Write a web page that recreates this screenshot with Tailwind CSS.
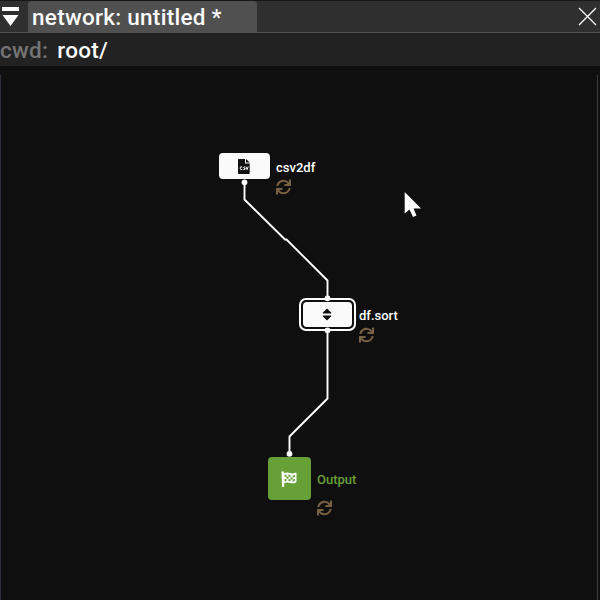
<!DOCTYPE html>
<html lang="en">
<head>
<meta charset="utf-8">
<title>network: untitled *</title>
<script src="https://cdn.jsdelivr.net/npm/@tailwindcss/browser@4"></script>
</head>
<body class="h-[600px] w-[600px] overflow-hidden bg-[#0f0f0f] font-['Roboto',sans-serif] text-white">
<svg class="hidden">
  <symbol id="sync" viewBox="0 0 512 512"><path d="M440.65 12.57l4 82.77A247.16 247.16 0 0 0 255.83 8C134.73 8 33.91 94.92 12.29 209.82A12 12 0 0 0 24.09 224h49.05a12 12 0 0 0 11.67-9.26 175.91 175.91 0 0 1 317-56.94l-101.46-4.86a12 12 0 0 0-12.57 12v47.41a12 12 0 0 0 12 12H500a12 12 0 0 0 12-12V12a12 12 0 0 0-12-12h-47.37a12 12 0 0 0-11.98 12.57zM255.83 432a175.61 175.61 0 0 1-146-77.8l101.8 4.87a12 12 0 0 0 12.57-12v-47.4a12 12 0 0 0-12-12H12a12 12 0 0 0-12 12V500a12 12 0 0 0 12 12h47.35a12 12 0 0 0 12-12.6l-4.15-82.57A247.17 247.17 0 0 0 255.83 504c121.11 0 221.93-86.92 243.55-201.82a12 12 0 0 0-11.8-14.18h-49.05a12 12 0 0 0-11.67 9.26A175.86 175.86 0 0 1 255.83 432z"/></symbol>
</svg>
<div class="flex h-full flex-col">
  <header class="flex h-[33px] shrink-0 border-t border-b border-t-[#171717] border-b-[#505050] bg-[#2f2f2f]">
    <button class="w-7 shrink-0" aria-label="Menu">
      <svg class="block h-[31px] w-7" viewBox="0 0 28 31" fill="#fff"><path d="M2 6h17v4H2zM2.500 14h16L10.500 25z"/></svg>
    </button>
    <div class="flex h-8 w-[229px] items-center rounded-t-[4px] bg-[#505050] pt-px pl-1 text-[22.500px] leading-none font-medium tracking-[0.280px] whitespace-nowrap text-[#fafafa]">network: untitled *</div>
    <button class="ml-auto w-7" aria-label="Close">
      <svg class="block h-[31px] w-7" viewBox="0 0 28 31" fill="none" stroke="#fff" stroke-width="1.300"><path d="M7 7l17 17M24 7L7 24"/></svg>
    </button>
  </header>
  <nav class="flex h-[33px] shrink-0 items-center gap-[9px] bg-[#222222] pt-[2px] text-[22.500px] leading-none font-medium tracking-[0.280px]">
    <span class="text-[#757575]">cwd:</span><span class="text-[#fafafa]">root/</span>
  </nav>
  <main class="relative mt-[9px] mr-[2px] flex-1 border-r border-l border-r-[#3c3c3c] border-l-[#30303c]">
    <!-- canvas coordinates start at the window's top left corner -->
    <div class="absolute -top-[75px] -left-px h-[600px] w-[600px]">
      <div class="absolute top-[153px] left-[219px] flex h-[26px] w-[51px] items-center justify-center rounded-[4px] bg-[#fafafa]">
        <svg class="mr-[2px] h-[15px] w-3" viewBox="0 0 12 15"><path fill="#111" d="M.700 0H7v4.500h4.700V14.300q0 .700-.700.700H.700Q0 15 0 14.300V.700Q0 0 .700 0zM8 0l3.700 3.600H8z"/><path d="M4.300 8q-2.200-1-2.200 1.200t2.200 1.200M7 8q-1.500-.300-1.400.600t1.300.800-.1 1.200H5.300M8 7.600l1.100 3L10.200 7.600" fill="none" stroke="#fafafa" stroke-width="1"/></svg>
      </div>
      <div class="absolute top-[298px] left-[299px] flex h-[33px] w-[57px] items-center justify-center rounded-[7px] border-2 border-white p-[2px]">
        <div class="flex h-full w-full items-center justify-center rounded-[4px] bg-[#fafafa]">
          <svg class="mr-px h-[13px] w-[10px]" viewBox="0 0 10 12" fill="#111"><path d="M5 0l4.300 4.200q.3.800-.5.800H1.200Q.4 5 .7 4.200zM5 12l4.300-4.200q.3-.8-.5-.8H1.200q-.8 0-.5.800z"/></svg>
        </div>
      </div>
      <div class="absolute top-[457px] left-[268px] flex h-[43px] w-[43px] items-center justify-center rounded-[4px] bg-[#68a038]">
        <svg class="mr-[2px] h-4 w-4" viewBox="0 0 16 16"><path fill="#fff" d="M.5 1.300a1.200 1.200 0 1 1 2.200.8Q5.800.7 9 2.100q2.800 1 5.700-.5.800-.1.800.7v8.300q0 .5-.5.800-3 1.600-6.200.5-2.900-1-5.600.1v3.200q0 .8-.8.800h-.6q-.8 0-.8-.8z"/><path fill="#68a038" d="M3.500 4l2-.6v2.100l-2 .6zM7.500 3.500l2 .6v2.100l-2-.6zM11.700 4.400l2.200-.5V6l-2.200.5zM5.500 5.600l2-.1v2.200l-2 .1zM9.500 6.300l2.200.2v2.100l-2.200-.2zM3.500 8.300l2-.5v2.100l-2 .5zM7.500 7.800l2 .6v2.100l-2-.6zM11.700 8.600l2.200-.6v2.100l-2.200.6z"/></svg>
      </div>
      <svg class="absolute inset-0 h-[600px] w-[600px]" viewBox="0 0 600 600">
        <path d="M244.500 182V199.500L285 239.500H286.500L327.500 280.500V298M327.500 330V398.500L289.500 436.500V454" fill="none" stroke="#fff" stroke-width="1.900"/>
        <g fill="#fff"><circle cx="244.500" cy="182.300" r="2.900"/><circle cx="327.500" cy="298.300" r="2.900"/><circle cx="327.500" cy="330.300" r="2.900"/><circle cx="289.500" cy="453.800" r="2.900"/></g>
      </svg>
      <span class="absolute top-[160px] left-[276px] text-[13px] leading-4 font-medium">csv2df</span>
      <span class="absolute top-[308px] left-[359px] text-[13px] leading-4 font-medium">df.sort</span>
      <span class="absolute top-[472px] left-[317px] text-[13px] leading-4 font-medium text-[#68a038]">Output</span>
      <svg class="absolute top-[179px] left-[276px] h-4 w-[15px] fill-[#786043]"><use href="#sync"/></svg>
      <svg class="absolute top-[327px] left-[359px] h-4 w-[15px] fill-[#786043]"><use href="#sync"/></svg>
      <svg class="absolute top-[500px] left-[317px] h-4 w-[15px] fill-[#786043]"><use href="#sync"/></svg>
      <svg class="absolute top-[192px] left-[404px] h-[27px] w-[18px]" viewBox="0 0 18 27" fill="#fff"><path d="M.7 0V21.500L5.500 17.500L9 25L12.500 23.500L9.500 16.500H17z"/></svg>
    </div>
  </main>
</div>
</body>
</html>
